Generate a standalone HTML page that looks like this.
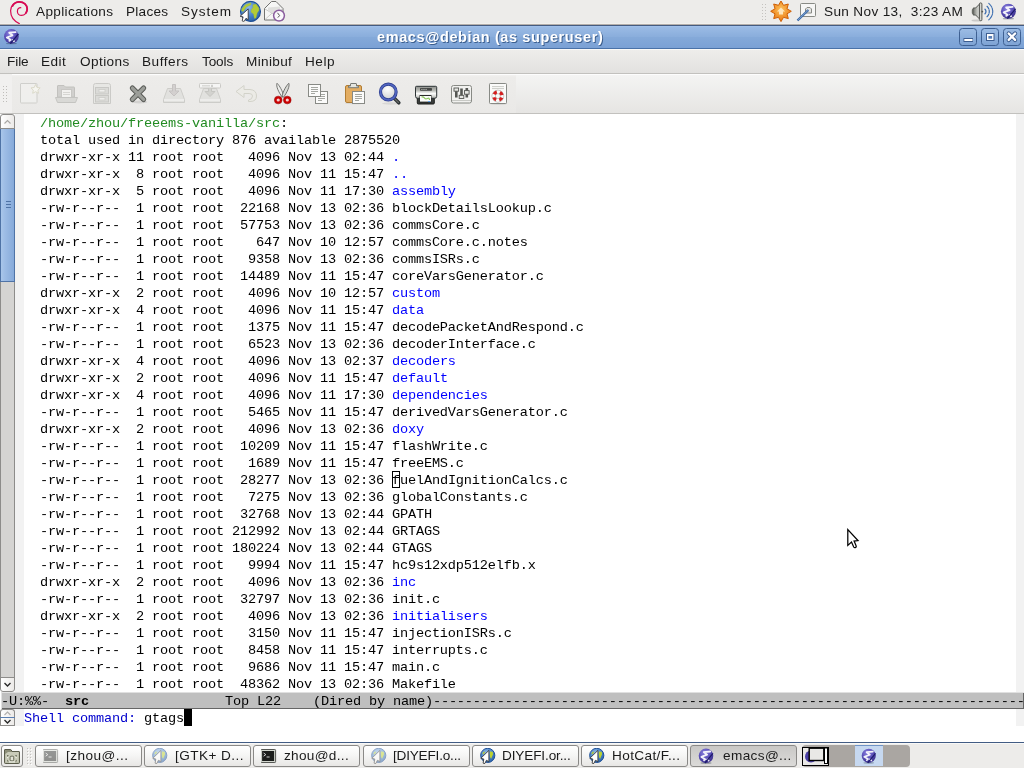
<!DOCTYPE html>
<html>
<head>
<meta charset="utf-8">
<title>emacs@debian</title>
<style>
html,body{margin:0;padding:0;}
body{width:1024px;height:768px;overflow:hidden;background:#ffffff;font-family:"Liberation Sans",sans-serif;position:relative;}
.abs{position:absolute;}
/* top panel */
#toppanel{left:0;top:0;width:1024px;height:23px;background:#edecea;border-bottom:1px solid #f1f0ee;box-shadow:0 1px 0 #b3aeaa;box-sizing:content-box;}
.ptxt{will-change:transform;position:absolute;top:0;height:24px;line-height:23px;font-size:13.6px;color:#1a1a1a;white-space:nowrap;}
/* title bar */
#titlebar{left:0;top:25px;width:1024px;height:24px;background:linear-gradient(#9cbce6 0%,#8aaedc 48%,#84a9d9 52%,#7ba1d5 100%);box-sizing:border-box;border-top:1px solid #445b80;border-bottom:1px solid #4a72a8;}
#titlebar .hl{position:absolute;left:0;top:0;width:1024px;height:1px;background:#a0c0eb;}
#title{will-change:transform;position:absolute;left:377px;top:0;line-height:23px;font-size:14.5px;letter-spacing:0.606px;font-weight:bold;color:#ffffff;text-shadow:1px 1px 0 #3d5f8e;white-space:nowrap;}
.wbtn{position:absolute;top:2px;width:18px;height:18px;box-sizing:border-box;border:1px solid #3e6092;border-radius:3.5px;background:linear-gradient(#9cbce4,#7ea3d4);}
/* menubar */
#menubar{left:0;top:49px;width:1024px;height:24px;background:linear-gradient(#fbfaf8 0,#fbfaf8 1px,#eeedeb 1px,#e2e1df 100%);border-bottom:1px solid #c2c1be;}
.mi{will-change:transform;position:absolute;top:0;height:24px;line-height:25px;font-size:13.6px;color:#1a1a1a;white-space:nowrap;}
/* toolbar */
#toolbar{left:0;top:74px;width:1024px;height:39px;background:linear-gradient(#fdfdfd 0,#fdfdfd 1px,#f4f4f3 1px,#e6e5e3 100%);border-bottom:1px solid #c2c1be;}
#tbmain{position:absolute;left:12px;top:0;width:504px;height:39px;background:linear-gradient(#fdfdfd 0,#fdfdfd 1px,#f2f1f0 1px,#edecea 3px,#eae9e7 100%);box-sizing:border-box;}
#handle{position:absolute;left:0;top:0;width:12px;height:39px;background:#f1f0ef;}
.tb{position:absolute;top:8px;width:24px;height:24px;}
/* text */
#scroll{left:0;top:117px;width:15px;height:572px;background:#d5d4d2;box-sizing:border-box;border-left:1px solid #8d8c8a;border-right:1px solid #8d8c8a;}
#fringeL{left:15px;top:114px;width:9px;height:578px;background:#f2f2f2;}
#fringeR{left:1016px;top:114px;width:8px;height:612px;background:#f2f2f2;}
#text{left:24px;top:114px;width:992px;height:578px;overflow:hidden;background:#fff;}
.ln{will-change:transform;height:17px;line-height:17px;font-family:"Liberation Mono",monospace;font-size:13.6px;letter-spacing:-0.16px;white-space:pre;color:#000;position:relative;top:1px;}
.g{color:#228b22;}
.b{color:#0000ff;}
.cur{}
.hbox{position:absolute;width:8px;height:17px;box-sizing:border-box;border:1px solid #000;}
.bbox{position:absolute;width:8px;height:17px;background:#000;}
#modeline{left:1px;top:692px;width:1023px;height:17px;background:#bfbfbf;box-sizing:border-box;overflow:hidden;box-shadow:inset 1px 1px 0 #e0e0e0, inset -1px -1px 0 #666;}
#modeline .ln{top:1px;left:0;}
#mini{left:24px;top:709px;width:992px;height:17px;}
.mb{color:#0000cd;}

/* scrollbar parts */
.sbtn{position:absolute;left:0;width:15px;box-sizing:border-box;border:1px solid #8d8c8a;background:linear-gradient(90deg,#ffffff,#eceae8);}
#sup{top:114px;height:15px;border-radius:3px 3px 0 0;}
#sdown{top:677px;height:15px;border-radius:0 0 3px 3px;}
#slider{left:0;top:129px;width:15px;height:153px;box-sizing:border-box;border:1px solid #4f73a6;border-top:none;background:linear-gradient(90deg,#a9c6ea 0%,#9dbce5 30%,#86aada 100%);}
.grip{position:absolute;left:5px;width:5px;height:1px;background:#4f73a6;}
#mup{top:709px;height:8px;border-radius:3px 3px 0 0;border-bottom:none;}
#mdown{top:718px;height:8px;border-radius:0 0 0 0;border-top:none;}
#mline{left:0;top:717px;width:15px;height:1px;background:#5b7fb0;}
/* bottom panel */
#botpanel{left:0;top:742px;width:1024px;height:26px;background:linear-gradient(#f8f8f7 0,#f8f8f7 1px,#edecea 1px,#edecea 100%);border-top:1px solid #425c84;box-sizing:border-box;}
.task{position:absolute;top:2px;height:22px;box-sizing:border-box;border:1px solid #8a8987;border-radius:3px;background:linear-gradient(#ffffff,#f6f6f5 45%,#e8e7e5);font-size:13.6px;line-height:19px;color:#1a1a1a;white-space:nowrap;overflow:hidden;}
.task span{will-change:transform;position:absolute;left:30px;top:0;}
.task.act{background:linear-gradient(#c9c8c6,#dbdad8);}

.ic{position:absolute;left:7px;top:2px;width:16px;height:16px;display:block;}
#ws{left:802px;top:2px;width:108px;height:22px;background:#aaa6a2;border-radius:4px;}
#ws .w1{position:absolute;left:0;top:2px;width:27px;height:19px;box-sizing:border-box;border:1.5px solid #000;background:#e9e8e6;}
#ws .w3{position:absolute;left:53px;top:0;width:28px;height:21px;box-sizing:border-box;border-top:1px solid #6f93c6;background:#c6d8f0;}
</style>
</head>
<body>
<svg width="0" height="0" style="position:absolute">
<defs>
<radialGradient id="gEm" cx="0.4" cy="0.3" r="0.8"><stop offset="0" stop-color="#8d84e0"/><stop offset="0.5" stop-color="#5a4fb8"/><stop offset="1" stop-color="#35297f"/></radialGradient>
<symbol id="emacs" viewBox="0 0 16 16">
<ellipse cx="8" cy="15" rx="5.5" ry="0.9" fill="#1a2a40" opacity="0.35"/>
<circle cx="8" cy="7.8" r="7.3" fill="url(#gEm)"/>
<path d="M12.2 3.5 L5.8 4.1 L9.1 6.7 L3.4 8.9 L7.2 11.2 L6 12.2" fill="none" stroke="#fff" stroke-width="1.8" stroke-linejoin="round" stroke-linecap="round" opacity="0.92"/>
<path d="M9.2 11.4 L10.6 12.6" stroke="#fff" stroke-width="1.8" stroke-linecap="round" opacity="0.9"/>
<path d="M15 5.4 L6.9 15" stroke="#1c1a6a" stroke-width="1.2"/>
</symbol>
<radialGradient id="gGl" cx="0.4" cy="0.3" r="0.8"><stop offset="0" stop-color="#8fb8e8"/><stop offset="0.6" stop-color="#3f7cc4"/><stop offset="1" stop-color="#2a5da0"/></radialGradient>
<symbol id="globe" viewBox="0 0 22 22">
<circle cx="11" cy="10.9" r="10" fill="url(#gGl)" stroke="#1f4f95" stroke-width="1.1"/>
<path d="M11.5 2.3 L5.9 4.2 L2.4 8.2 L2 10.4 L3.7 11.1 L6.8 6.4 L11.5 4.2 Z" fill="#b3cb36" stroke="#9fb82c" stroke-width="0.3"/>
<path d="M13.4 4.2 L16.5 3.6 L19.3 7.3 L19.6 9.8 L17.7 12.6 L16.5 17.6 L14.9 17.9 L14 13.6 L11.5 11.4 L11.8 8.9 L13.4 7.3 Z" fill="#b3cb36" stroke="#9fb82c" stroke-width="0.3"/>
<path d="M8.7 8.4 L0.6 15.8 L3.6 16.4 L2.7 20.4 Q3.8 21.2 4.9 20.6 L6.5 17.8 L8.7 19.3 Z" fill="#fff" stroke="#3a3a3a" stroke-width="0.9" stroke-linejoin="round"/>
</symbol>
<symbol id="term" viewBox="0.9 0 16 16" overflow="visible">
<rect x="0.5" y="1.5" width="15" height="13" rx="0.8" fill="#d3d7cf" stroke="#555753"/>
<rect x="2" y="3" width="12" height="10" fill="#1c1e1c"/>
<path d="M3.5 5 l2.2 1.6 l-2.2 1.6" fill="none" stroke="#e8e8e8" stroke-width="0.9"/><path d="M6.5 9 h3" stroke="#e8e8e8" stroke-width="0.9"/>
</symbol>
<symbol id="epi" viewBox="0 0 16 16">
<circle cx="7.75" cy="7.4" r="7.1" fill="url(#gGl)" stroke="#1f4f95" stroke-width="1"/>
<path d="M2.4 5.8 L3.5 3.8 L5.4 3.7 L4.2 5.6 L3 6.6 Z" fill="#b3cb36"/>
<path d="M9.9 3.5 L12.7 3.8 L13.1 6.3 L12.1 8.5 L11.2 10.7 L10.2 9.4 L9.8 6.3 Z" fill="#bcd230"/>
<path d="M8.9 2.4 L0.8 10.3 L3.8 11 L3.1 15.1 Q4 15.9 5 15.3 L6.4 12.3 L8.9 13.6 Z" fill="#fff" stroke="#3a3a3a" stroke-width="0.9" stroke-linejoin="round"/>
</symbol>
</defs></svg>
<!-- TOP PANEL -->
<div id="toppanel" class="abs">
<svg class="abs" style="left:0;top:0" width="1024" height="24" viewBox="0 0 1024 24">
<!-- debian swirl -->
<path d="M19.3 23.6 C14.2 21.2 10.6 16.2 10.6 10.8 C10.6 5.4 14.2 1.9 19.2 1.9 C24 1.9 27.2 5 27.2 9 C27.2 12.8 24.6 15.4 21.6 15.4 C19.2 15.4 17.4 13.6 17.4 11.4 C17.4 9.3 18.9 7.8 20.8 7.7" fill="none" stroke="#d70a53" stroke-width="1.2" stroke-linecap="round"/>
<path d="M12.5 6 C14 3.2 16.5 1.9 19.2 1.9 C24 1.9 27.2 5 27.2 9 C27.2 10.5 26.8 11.8 26 12.9" fill="none" stroke="#d70a53" stroke-width="1.8" stroke-linecap="round"/>
<!-- globe -->
<use href="#globe" x="239.5" y="0.5" width="22" height="22"/>
<!-- mail -->
<path d="M264.5 8.5 L271.5 1.5 L276 1.5 L283 8.5 L283 20 L264.5 20 Z" fill="#f6f6f5" stroke="#727270" stroke-width="1"/>
<path d="M265 9 L273.5 14 L282 9 M265 19.5 L272 13.2 M282 19.5 L275 13.2" fill="none" stroke="#c5c5c3" stroke-width="0.9"/>
<path d="M268 7.5 L280 6.5 L280 11 L273.5 13.5 L268 11 Z" fill="#e0e0de"/>
<circle cx="279" cy="15.6" r="5.4" fill="#faf8fb" stroke="#8a5c9e" stroke-width="1.5"/>
<path d="M277.5 12.8 L279.6 15.6 L277.8 17.6" fill="none" stroke="#555" stroke-width="1"/>
<!-- handle dots -->
<g fill="#c4c2bf"><rect x="762" y="4" width="1" height="1"/><rect x="765" y="4" width="1" height="1"/><rect x="762" y="7" width="1" height="1"/><rect x="765" y="7" width="1" height="1"/><rect x="762" y="10" width="1" height="1"/><rect x="765" y="10" width="1" height="1"/><rect x="762" y="13" width="1" height="1"/><rect x="765" y="13" width="1" height="1"/><rect x="762" y="16" width="1" height="1"/><rect x="765" y="16" width="1" height="1"/><rect x="762" y="19" width="1" height="1"/><rect x="765" y="19" width="1" height="1"/></g>
<!-- star -->
<radialGradient id="gSt" cx="0.5" cy="0.4" r="0.6"><stop offset="0" stop-color="#fcbf5a"/><stop offset="1" stop-color="#ea7a12"/></radialGradient>
<path id="star" d="" />
<polygon points="781.0,1.0 783.5,5.3 788.3,4.0 787.0,8.8 791.3,11.3 787.0,13.8 788.3,18.6 783.5,17.3 781.0,21.6 778.5,17.3 773.7,18.6 775.0,13.8 770.7,11.3 775.0,8.8 773.7,4.0 778.5,5.3" fill="url(#gSt)" stroke="#cf5f04" stroke-width="1" stroke-linejoin="round"/>
<path d="M781 7.6 L785 11.4 L783 11.4 L783 14.6 L779 14.6 L779 11.4 L777 11.4 Z" fill="#fde6bd"/>
<!-- network -->
<rect x="800.5" y="3.5" width="15" height="13" rx="1" fill="#f6f6f5" stroke="#888a85" stroke-width="1"/>
<path d="M805.5 13 L805.5 9 L807 7.5 L810 7.5 L811.5 9 L811.5 13 Z" fill="#e6e6e4" stroke="#888a85" stroke-width="1"/>
<path d="M808.3 10 L797.5 20.5" stroke="#3465a4" stroke-width="2.3"/>
<path d="M808.3 10 L797.5 20.5" stroke="#9db8dc" stroke-width="0.7"/>
<!-- volume -->
<linearGradient id="gSp" x1="0" y1="0" x2="1" y2="0"><stop offset="0" stop-color="#6f716c"/><stop offset="0.5" stop-color="#b4b6b1"/><stop offset="1" stop-color="#e6e7e4"/></linearGradient>
<ellipse cx="977" cy="20.6" rx="5.5" ry="1" fill="#000" opacity="0.15"/>
<path d="M973.2 8 L975.6 8 L979.6 4 L979.6 19 L975.6 15 L973.2 15 Z" fill="url(#gSp)" stroke="#555753" stroke-width="1" stroke-linejoin="round"/>
<rect x="979.4" y="2.9" width="2.5" height="17.8" rx="1.2" fill="#d6d7d3" stroke="#555753" stroke-width="1"/>
<rect x="971.8" y="9" width="2" height="5" rx="0.9" fill="#6a6c67"/>
<circle cx="982.3" cy="11.6" r="0.9" fill="#555753"/>
<g fill="none" stroke="#3b6db0" stroke-linecap="round">
<path d="M985 9.3 A3 3 0 0 1 985 13.7" stroke-width="1.3"/>
<path d="M987 6.3 A7 7 0 0 1 987 16.7" stroke-width="1.2" stroke-dasharray="3 1.2"/>
<path d="M988.8 3.4 A10.5 10.5 0 0 1 988.8 19.8" stroke-width="1.1" stroke-dasharray="5 1"/>
</g>
<!-- emacs -->
<use href="#emacs" x="1000.2" y="3.3" width="16.4" height="16.4"/>
</svg>
  <div class="ptxt" style="left:36.0px;letter-spacing:0.341px">Applications</div>
  <div class="ptxt" style="left:126.0px;letter-spacing:0.25px">Places</div>
  <div class="ptxt" style="left:181.25px;letter-spacing:0.95px">System</div>
  <div class="ptxt" style="left:823.75px;letter-spacing:0.342px;white-space:pre">Sun Nov 13,  3:23 AM</div>
</div>
<!-- TITLE BAR -->
<div id="titlebar" class="abs">
  <div class="hl"></div>
  <div id="title">emacs@debian (as superuser)</div>
  <div class="wbtn" style="left:959px"></div>
  <div class="wbtn" style="left:981px"></div>
  <div class="wbtn" style="left:1003px"></div>
  <svg class="abs" style="left:0;top:0" width="1024" height="22" viewBox="0 26 1024 22">
  <use href="#emacs" x="3.4" y="28.6" width="16" height="16"/>
  <path d="M963.5 40 h9.5" stroke="#3c5d90" stroke-width="4" stroke-linecap="butt"/>
  <path d="M964.3 40 h8.2" stroke="#fff" stroke-width="2"/>
  <rect x="986" y="33" width="8.5" height="8" fill="#3c5d90"/>
  <rect x="987" y="34" width="6.5" height="6" fill="#fff"/>
  <rect x="988.4" y="36" width="3.7" height="2.7" fill="#5a80b8"/>
  <path d="M1008.7 33.5 l6.4 6.4 M1015.1 33.5 l-6.4 6.4" stroke="#3c5d90" stroke-width="4.2" stroke-linecap="round"/>
  <path d="M1008.7 33.5 l6.4 6.4 M1015.1 33.5 l-6.4 6.4" stroke="#fff" stroke-width="2.4" stroke-linecap="round"/>
  </svg>
</div>
<!-- MENU BAR -->
<div id="menubar" class="abs">
  <div class="mi" style="left:7.0px;letter-spacing:-0.083px">File</div>
  <div class="mi" style="left:41.0px;letter-spacing:0.417px">Edit</div>
  <div class="mi" style="left:79.5px;letter-spacing:0.417px">Options</div>
  <div class="mi" style="left:142.0px;letter-spacing:0.542px">Buffers</div>
  <div class="mi" style="left:201.75px;letter-spacing:-0.125px">Tools</div>
  <div class="mi" style="left:246.0px;letter-spacing:0.333px">Minibuf</div>
  <div class="mi" style="left:305.0px;letter-spacing:0.5px">Help</div>
</div>
<!-- TOOLBAR -->
<div id="toolbar" class="abs">
  <div id="handle"></div>
<div id="tbmain"></div>
<svg class="abs" style="left:0;top:0" width="1024" height="39" viewBox="0 74 1024 39">
<!-- handle dots -->
<g fill="#bfbdba"><rect x="3" y="86" width="1" height="1"/><rect x="6" y="86" width="1" height="1"/><rect x="3" y="89" width="1" height="1"/><rect x="6" y="89" width="1" height="1"/><rect x="3" y="92" width="1" height="1"/><rect x="6" y="92" width="1" height="1"/><rect x="3" y="95" width="1" height="1"/><rect x="6" y="95" width="1" height="1"/><rect x="3" y="98" width="1" height="1"/><rect x="6" y="98" width="1" height="1"/><rect x="3" y="101" width="1" height="1"/><rect x="6" y="101" width="1" height="1"/></g>
<!-- new (disabled) -->
<g opacity="0.7">
<path d="M20.5 84 q0 -0.5 0.5 -0.5 h15.5 q0.5 0 0.5 0.5 v18.5 q0 0.5 -0.5 0.5 h-15.5 q-0.5 0 -0.5 -0.5 z" fill="#f2f2f0" stroke="#c4c4c0"/>
<path d="M35.6 84.5 l1.4 3 l3.2 0.4 l-2.3 2.2 l0.6 3.2 l-2.9 -1.6 l-2.9 1.6 l0.6 -3.2 l-2.3 -2.2 l3.2 -0.4 z" fill="#fafaf4" stroke="#d4d2bc"/>
</g>
<!-- open (disabled) -->
<g opacity="0.75">
<path d="M57.5 97 v-11 q0 -0.5 0.5 -0.5 h6 l1.5 1.5 h8.5 q0.5 0 0.5 0.5 v9.5 z" fill="#c8c8c5" stroke="#b4b4b0"/>
<rect x="61.5" y="89.5" width="10" height="8" fill="#f4f4f2" stroke="#bcbcb8"/>
<path d="M63 92.5 h7 M63 94.5 h7" stroke="#cfcfcb"/>
<path d="M55.5 97.5 h22 l-2 5 h-18 z" fill="#d4d4d1" stroke="#b8b8b4" stroke-linejoin="round"/>
</g>
<!-- dired (disabled) -->
<g opacity="0.75">
<path d="M93.5 103.5 v-18 q0 -2 2 -2 h13 q2 0 2 2 v18 z" fill="#e6e6e3" stroke="#c0c0bc"/>
<rect x="95.5" y="87.5" width="13" height="6.5" fill="#d6d6d3" stroke="#bdbdb9"/>
<rect x="95.5" y="95.5" width="13" height="6.5" fill="#d6d6d3" stroke="#bdbdb9"/>
<rect x="99" y="89.5" width="6" height="2.5" fill="#f1f1ef" stroke="#c2c2be" stroke-width="0.8"/>
<rect x="99" y="97.5" width="6" height="2.5" fill="#f1f1ef" stroke="#c2c2be" stroke-width="0.8"/>
</g>
<!-- close X -->
<ellipse cx="139.5" cy="102" rx="8" ry="1.4" fill="#000" opacity="0.1"/>
<path d="M132.4 88.1 L143.6 99.4 M143.6 88.1 L132.4 99.4" stroke="#555753" stroke-width="5.2" stroke-linecap="round"/>
<path d="M132.4 88.1 L143.6 99.4 M143.6 88.1 L132.4 99.4" stroke="#9c9e99" stroke-width="3.4" stroke-linecap="round"/>
<!-- save (disabled) -->
<g opacity="0.7">
<path d="M163.5 99.5 l4 -11 h13 l4 11 v3 h-21 z" fill="#dededb" stroke="#c0c0bc" stroke-linejoin="round"/>
<path d="M164 100 h20" stroke="#fff"/>
<path d="M172.5 84.5 h3 v6.5 h3.5 l-5 5 l-5 -5 h3.5 z" fill="#c9c5c5" stroke="#b5b1b1" stroke-linejoin="round"/>
</g>
<!-- save as (disabled) -->
<g opacity="0.7">
<path d="M199.5 99.5 l4 -11 h13 l4 11 v3 h-21 z" fill="#dededb" stroke="#c0c0bc" stroke-linejoin="round"/>
<path d="M200 100 h20" stroke="#fff"/>
<path d="M208.5 86.5 h3 v5 h3.5 l-5 5 l-5 -5 h3.5 z" fill="#c9c9c5" stroke="#b5b5b1" stroke-linejoin="round"/>
<rect x="199.5" y="83.5" width="21" height="4.5" rx="0.8" fill="#fafaf9" stroke="#bcbcb8"/>
<path d="M202 85.8 h8" stroke="#cfcfcb" stroke-width="1.4"/><path d="M212 84.8 v2.2" stroke="#8a8a86"/>
</g>
<!-- undo (disabled) -->
<g opacity="0.7">
<path d="M236 91.5 l8 -6 v4 h6 q6.5 0.5 6.5 6.5 q0 5.5 -6.5 5.5 h-1.5 v-1.5 q4 -0.5 4 -4 q0 -2.5 -3.5 -2.5 h-5 v4 z" fill="#ecece6" stroke="#c8c8bc" stroke-linejoin="round"/>
</g>
<!-- cut -->
<path d="M277 83.3 C275.8 86 278.5 92 282.2 97.2 L283.8 96 C282.5 91 279.5 85.5 277 83.3 Z" fill="#eeeeec" stroke="#555753" stroke-width="0.8" stroke-linejoin="round"/>
<path d="M288.8 83.3 C290 86 287.3 92 283.6 97.2 L282 96 C283.3 91 286.3 85.5 288.8 83.3 Z" fill="#d9dad6" stroke="#555753" stroke-width="0.8" stroke-linejoin="round"/>
<circle cx="278.2" cy="100" r="2.7" fill="#f4d0d0" stroke="#cc0000" stroke-width="2.2"/>
<circle cx="287.3" cy="100" r="2.7" fill="#f4d0d0" stroke="#cc0000" stroke-width="2.2"/>
<circle cx="278.2" cy="100" r="3.9" fill="none" stroke="#8f0000" stroke-width="0.5"/>
<circle cx="287.3" cy="100" r="3.9" fill="none" stroke="#8f0000" stroke-width="0.5"/>
<!-- copy -->
<rect x="315.5" y="91.5" width="12" height="12" fill="#fbfbfa" stroke="#888a85"/>
<path d="M318 94.5 h7 M318 96.5 h7 M318 98.5 h7 M318 100.5 h4" stroke="#a5a7a2"/>
<rect x="308.5" y="84.5" width="12" height="12" fill="#fbfbfa" stroke="#888a85"/>
<path d="M311 87.5 h7 M311 89.5 h7 M311 91.5 h7 M311 93.5 h4" stroke="#a5a7a2"/>
<!-- paste -->
<ellipse cx="355" cy="103.3" rx="10" ry="1" fill="#000" opacity="0.08"/>
<rect x="345.5" y="85.5" width="16" height="17" rx="1.5" fill="#e3ad62" stroke="#b27d33"/>
<path d="M348.5 87.7 v-1.7 h2 v-2 q0 -0.5 0.5 -0.5 h5 q0.5 0 0.5 0.5 v2 h2 v1.7 z" fill="#e4e6e1" stroke="#777974" stroke-linejoin="round"/>
<rect x="352.5" y="91.5" width="12" height="12" fill="#fbfbfa" stroke="#888a85"/>
<path d="M355 94.5 h7 M355 96.5 h7 M355 98.5 h7 M355 100.5 h4" stroke="#a5a7a2"/>
<!-- search -->
<ellipse cx="391" cy="103.5" rx="9" ry="1.2" fill="#000" opacity="0.08"/>
<path d="M393.5 97.5 L398.8 102.8" stroke="#2e3436" stroke-width="3.6" stroke-linecap="round"/>
<path d="M394 98 L398.5 102.5" stroke="#6a6c68" stroke-width="1.1" stroke-linecap="round"/>
<radialGradient id="gGlass" cx="0.45" cy="0.3" r="0.7"><stop offset="0" stop-color="#ffffff"/><stop offset="1" stop-color="#d0d2d0"/></radialGradient>
<circle cx="388.3" cy="92" r="7.8" fill="url(#gGlass)" stroke="#2b3c8c" stroke-width="3.2"/>
<circle cx="388.3" cy="92" r="7.8" fill="none" stroke="#5266c0" stroke-width="1.8"/>
<!-- print -->
<linearGradient id="gPr" x1="0" y1="0" x2="0" y2="1"><stop offset="0" stop-color="#8e908c"/><stop offset="0.35" stop-color="#b9bbb6"/><stop offset="0.6" stop-color="#fbfbfa"/><stop offset="0.75" stop-color="#e4e5e2"/><stop offset="1" stop-color="#a9aba6"/></linearGradient>
<path d="M417.3 97 h17 v6 q0 1 -1 1 h-15 q-1 0 -1 -1 z" fill="#3a3d3b" stroke="#1c1e1c" stroke-width="1"/>
<path d="M416.5 86.3 h19.2 q1 0 1 1 v9 q0 2 -2 2 h-17.2 q-2 0 -2 -2 v-9 q0 -1 1 -1 z" fill="url(#gPr)" stroke="#2e3436" stroke-width="1"/>
<rect x="420" y="88" width="12" height="2.8" rx="0.7" fill="#454745"/>
<path d="M421.3 89.4 h1.2 M423.4 89.4 h1.2 M425.5 89.4 h1.2" stroke="#c8cac6" stroke-width="1"/>
<rect x="419.5" y="95" width="12" height="9" fill="#2a2c2a"/>
<rect x="420" y="96" width="11" height="5.6" fill="#fbfcfa"/>
<path d="M421.5 97 q2 -0.5 3 1 t3 0.5 t2 1.5" stroke="#8cc45c" stroke-width="1.2" fill="none"/>
<rect x="428" y="101" width="2.2" height="1.1" fill="#5b9be0"/>
<!-- preferences -->
<rect x="451.5" y="85.5" width="20" height="17.5" rx="2" fill="#f1f1ef" stroke="#888a85"/>
<path d="M452 100.5 h19" stroke="#c8c9c5" stroke-width="1"/>
<path d="M456.3 88 v9.5 M461.5 88.5 v9.5 M466.8 88 v9.5" stroke="#555753" stroke-width="2.6"/>
<rect x="454" y="88" width="4.6" height="3.2" fill="#e6e7e3" stroke="#555753" stroke-width="0.9"/>
<rect x="459.2" y="95.3" width="4.6" height="3.2" fill="#e6e7e3" stroke="#555753" stroke-width="0.9"/>
<rect x="464.5" y="90.6" width="4.6" height="3.6" fill="#e6e7e3" stroke="#555753" stroke-width="0.9"/>
<!-- help -->
<ellipse cx="498.5" cy="103.8" rx="9" ry="0.9" fill="#000" opacity="0.1"/>
<rect x="489.5" y="83.5" width="17" height="20" rx="0.8" fill="#fbfbfa" stroke="#888a85"/>
<path d="M492 86.6 h12 M492 88.6 h12" stroke="#c4c5c1" stroke-width="0.9"/>
<circle cx="497.9" cy="96.1" r="4.2" fill="none" stroke="#8f918c" stroke-width="4.2" opacity="0.8"/>
<circle cx="497.9" cy="96.1" r="4.2" fill="none" stroke="#fafafa" stroke-width="3.2"/>
<circle cx="497.9" cy="96.1" r="4.2" fill="none" stroke="#d42020" stroke-width="3.2" stroke-dasharray="3.3 3.3" stroke-dashoffset="-1.65"/>
</svg>
</div>
<!-- TEXT AREA -->
<div id="scroll" class="abs"></div>
<div id="sup" class="abs sbtn"><svg width="13" height="13" style="position:absolute;left:0;top:0"><path d="M3.5 8.5 L6.5 5.5 L9.5 8.5" fill="none" stroke="#a8a6a3" stroke-width="1.1"/></svg></div>
<div id="slider" class="abs"><div class="grip" style="top:72px"></div><div class="grip" style="top:75px"></div><div class="grip" style="top:78px"></div></div>
<div id="sdown" class="abs sbtn"><svg width="13" height="13" style="position:absolute;left:0;top:0"><path d="M3.5 5 L6.5 8 L9.5 5" fill="none" stroke="#2a2a2a" stroke-width="1.4"/></svg></div>
<div id="mup" class="abs sbtn"><svg width="13" height="7" style="position:absolute;left:0;top:0"><path d="M3.5 5 L6.5 2 L9.5 5" fill="none" stroke="#b0aeac" stroke-width="1.1"/></svg></div>
<div id="mline" class="abs"></div>
<div id="mdown" class="abs sbtn"><svg width="13" height="7" style="position:absolute;left:0;top:0"><path d="M3.5 2 L6.5 5 L9.5 2" fill="none" stroke="#2a2a2a" stroke-width="1.4"/></svg></div>
<div id="fringeL" class="abs"></div>
<div id="fringeR" class="abs"></div>
<div class="abs" style="left:15px;top:709px;width:9px;height:17px;background:#f2f2f2"></div>
<div id="text" class="abs">
<div class="ln">  <span class="g">/home/zhou/freeems-vanilla/src</span>:</div>
<div class="ln">  total used in directory 876 available 2875520</div>
<div class="ln">  drwxr-xr-x 11 root root   4096 Nov 13 02:44 <span class="b">.</span></div>
<div class="ln">  drwxr-xr-x  8 root root   4096 Nov 11 15:47 <span class="b">..</span></div>
<div class="ln">  drwxr-xr-x  5 root root   4096 Nov 11 17:30 <span class="b">assembly</span></div>
<div class="ln">  -rw-r--r--  1 root root  22168 Nov 13 02:36 blockDetailsLookup.c</div>
<div class="ln">  -rw-r--r--  1 root root  57753 Nov 13 02:36 commsCore.c</div>
<div class="ln">  -rw-r--r--  1 root root    647 Nov 10 12:57 commsCore.c.notes</div>
<div class="ln">  -rw-r--r--  1 root root   9358 Nov 13 02:36 commsISRs.c</div>
<div class="ln">  -rw-r--r--  1 root root  14489 Nov 11 15:47 coreVarsGenerator.c</div>
<div class="ln">  drwxr-xr-x  2 root root   4096 Nov 10 12:57 <span class="b">custom</span></div>
<div class="ln">  drwxr-xr-x  4 root root   4096 Nov 11 15:47 <span class="b">data</span></div>
<div class="ln">  -rw-r--r--  1 root root   1375 Nov 11 15:47 decodePacketAndRespond.c</div>
<div class="ln">  -rw-r--r--  1 root root   6523 Nov 13 02:36 decoderInterface.c</div>
<div class="ln">  drwxr-xr-x  4 root root   4096 Nov 13 02:37 <span class="b">decoders</span></div>
<div class="ln">  drwxr-xr-x  2 root root   4096 Nov 11 15:47 <span class="b">default</span></div>
<div class="ln">  drwxr-xr-x  4 root root   4096 Nov 11 17:30 <span class="b">dependencies</span></div>
<div class="ln">  -rw-r--r--  1 root root   5465 Nov 11 15:47 derivedVarsGenerator.c</div>
<div class="ln">  drwxr-xr-x  2 root root   4096 Nov 13 02:36 <span class="b">doxy</span></div>
<div class="ln">  -rw-r--r--  1 root root  10209 Nov 11 15:47 flashWrite.c</div>
<div class="ln">  -rw-r--r--  1 root root   1689 Nov 11 15:47 freeEMS.c</div>
<div class="ln">  -rw-r--r--  1 root root  28277 Nov 13 02:36 <span class="cur">f</span>uelAndIgnitionCalcs.c</div>
<div class="ln">  -rw-r--r--  1 root root   7275 Nov 13 02:36 globalConstants.c</div>
<div class="ln">  -rw-r--r--  1 root root  32768 Nov 13 02:44 GPATH</div>
<div class="ln">  -rw-r--r--  1 root root 212992 Nov 13 02:44 GRTAGS</div>
<div class="ln">  -rw-r--r--  1 root root 180224 Nov 13 02:44 GTAGS</div>
<div class="ln">  -rw-r--r--  1 root root   9994 Nov 11 15:47 hc9s12xdp512elfb.x</div>
<div class="ln">  drwxr-xr-x  2 root root   4096 Nov 13 02:36 <span class="b">inc</span></div>
<div class="ln">  -rw-r--r--  1 root root  32797 Nov 13 02:36 init.c</div>
<div class="ln">  drwxr-xr-x  2 root root   4096 Nov 13 02:36 <span class="b">initialisers</span></div>
<div class="ln">  -rw-r--r--  1 root root   3150 Nov 11 15:47 injectionISRs.c</div>
<div class="ln">  -rw-r--r--  1 root root   8458 Nov 11 15:47 interrupts.c</div>
<div class="ln">  -rw-r--r--  1 root root   9686 Nov 11 15:47 main.c</div>
<div class="ln">  -rw-r--r--  1 root root  48362 Nov 13 02:36 Makefile</div>
<div class="hbox" style="left:368px;top:357px"></div>
</div>
<div id="modeline" class="abs"><div class="ln">-U:%%-  <b>src</b>                 Top L22    (Dired by name)--------------------------------------------------------------------------------------</div></div>
<div id="mini" class="abs"><div class="ln"><span class="mb">Shell command: </span>gtags</div><div class="bbox" style="left:160px;top:0"></div></div>
<svg class="abs" style="left:840px;top:524px" width="26" height="28" viewBox="840 524 26 28"><path d="M847.8 529.6 L847.8 545.4 L851.5 542.1 L853.7 547 Q854.5 548.1 855.7 547.4 Q856.6 546.8 856.1 545.7 L854.1 541.1 L858 540.6 Z" fill="#fff" stroke="#000" stroke-width="1.25" stroke-linejoin="miter"/></svg>
<!-- BOTTOM PANEL -->
<div id="botpanel" class="abs">
<div class="task" style="left:1px;width:22px"><svg width="20" height="20" style="position:absolute;left:0;top:0" viewBox="0 0 20 20"><path d="M2.5 4 q0 -0.5 0.5 -0.5 h5.5 q0.5 0 0.7 0.4 l0.8 1.6 h7 q0.5 0 0.5 0.5 v10.5 q0 1 -1 1 h-13 q-1 0 -1 -1 z" fill="#8c8e78" stroke="#5a5c4b" stroke-width="1"/><path d="M3.2 8 l2.8 -2 h10.8 v10.8 h-13.6 z" fill="#c9cbb9"/><path d="M5 9 h2 l-2 2 z M14.8 9 v2 l-2 -2 z M5 15.5 v-2 l2 2 z M14.8 15.5 h-2 l2 -2 z" fill="#70725f"/><path d="M5.2 11.5 l1 0 M13.6 11.5 l1 0" stroke="#f4f5ec" stroke-width="1"/><rect x="8.1" y="10.2" width="3.6" height="4.6" rx="1" fill="#e3e4d8" stroke="#5a5c4b" stroke-width="0.9"/><path d="M7 16 h6" stroke="#f2f3ea" stroke-width="1"/></svg></div>
<svg class="abs" style="left:27px;top:5px" width="5" height="18"><rect x="0" y="0" width="1" height="1" fill="#c2c0bd"/><rect x="1" y="1" width="1" height="1" fill="#fff"/><rect x="3" y="0" width="1" height="1" fill="#c2c0bd"/><rect x="4" y="1" width="1" height="1" fill="#fff"/><rect x="0" y="3" width="1" height="1" fill="#c2c0bd"/><rect x="1" y="4" width="1" height="1" fill="#fff"/><rect x="3" y="3" width="1" height="1" fill="#c2c0bd"/><rect x="4" y="4" width="1" height="1" fill="#fff"/><rect x="0" y="6" width="1" height="1" fill="#c2c0bd"/><rect x="1" y="7" width="1" height="1" fill="#fff"/><rect x="3" y="6" width="1" height="1" fill="#c2c0bd"/><rect x="4" y="7" width="1" height="1" fill="#fff"/><rect x="0" y="9" width="1" height="1" fill="#c2c0bd"/><rect x="1" y="10" width="1" height="1" fill="#fff"/><rect x="3" y="9" width="1" height="1" fill="#c2c0bd"/><rect x="4" y="10" width="1" height="1" fill="#fff"/><rect x="0" y="12" width="1" height="1" fill="#c2c0bd"/><rect x="1" y="13" width="1" height="1" fill="#fff"/><rect x="3" y="12" width="1" height="1" fill="#c2c0bd"/><rect x="4" y="13" width="1" height="1" fill="#fff"/><rect x="0" y="15" width="1" height="1" fill="#c2c0bd"/><rect x="1" y="16" width="1" height="1" fill="#fff"/><rect x="3" y="15" width="1" height="1" fill="#c2c0bd"/><rect x="4" y="16" width="1" height="1" fill="#fff"/></svg>
<div class="task" style="left:35px;width:107px"><svg class="ic" style="opacity:0.45"><use href="#term" width="16" height="16"/></svg><span style="left:29.80px;letter-spacing:0.462px">[zhou@...</span></div>
<div class="task" style="left:144px;width:107px"><svg class="ic" style="opacity:0.5"><use href="#epi" width="16" height="16"/></svg><span style="left:29.50px;letter-spacing:0.444px">[GTK+ D...</span></div>
<div class="task" style="left:253px;width:107px"><svg class="ic"><use href="#term" width="16" height="16"/></svg><span style="left:30.00px;letter-spacing:0.312px">zhou@d...</span></div>
<div class="task" style="left:363px;width:107px"><svg class="ic" style="opacity:0.5"><use href="#epi" width="16" height="16"/></svg><span style="left:28.75px;letter-spacing:-0.205px">[DIYEFI.o...</span></div>
<div class="task" style="left:472px;width:107px"><svg class="ic"><use href="#epi" width="16" height="16"/></svg><span style="left:29.00px;letter-spacing:-0.136px">DIYEFI.or...</span></div>
<div class="task" style="left:581px;width:107px"><svg class="ic"><use href="#epi" width="16" height="16"/></svg><span style="left:30.00px;letter-spacing:0.375px">HotCat/F...</span></div>
<div class="task act" style="left:690px;width:107px"><svg class="ic"><use href="#emacs" width="16" height="16"/></svg><span style="left:31.50px;letter-spacing:0.375px">emacs@...</span></div>
<div class="abs" id="ws"><div class="w1"></div><div class="w3"></div>
<svg style="position:absolute;left:0;top:0" width="108" height="22" viewBox="802 745 108 22">
<circle cx="811" cy="756.5" r="6" fill="#4a3fa5"/>
<rect x="809.2" y="748.2" width="14.6" height="12.3" fill="#e9e8e6" stroke="#000" stroke-width="1.4"/>
<rect x="824.5" y="748" width="3" height="15.5" fill="#fff" stroke="#000" stroke-width="1"/>

<use href="#emacs" x="861" y="748" width="15.5" height="16"/>
</svg></div>
</div>
</body>
</html>
